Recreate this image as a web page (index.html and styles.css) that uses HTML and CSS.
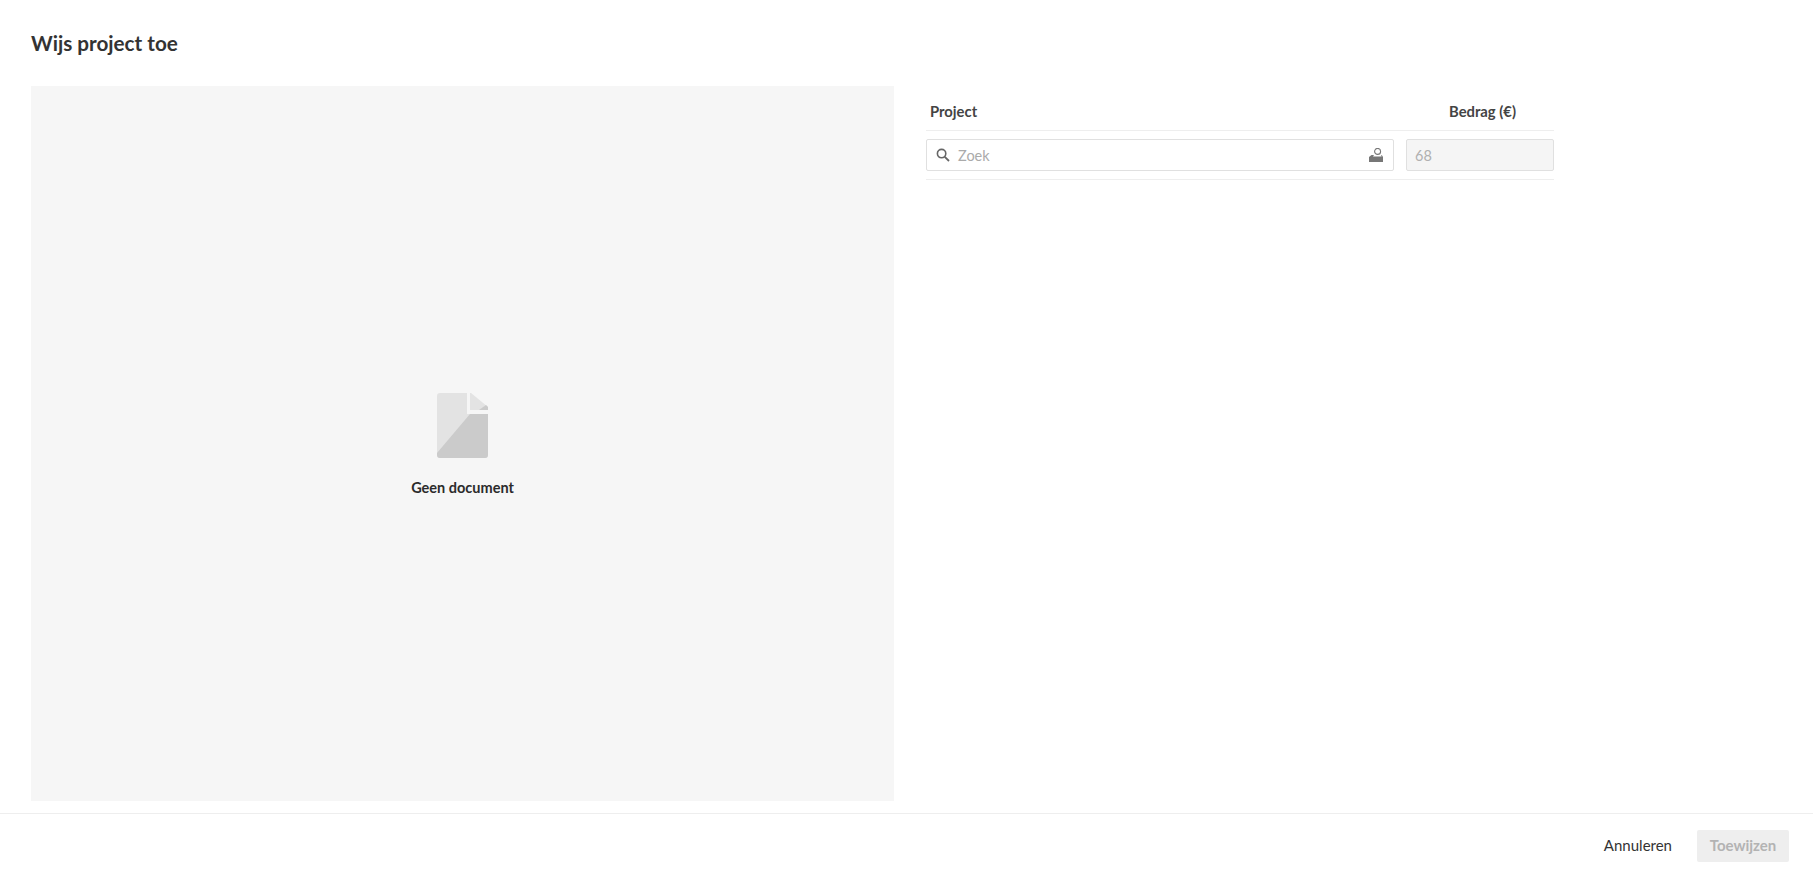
FILE: index.html
```html
<!DOCTYPE html>
<html lang="nl">
<head>
  <meta charset="UTF-8" />
  <title>Wijs project toe</title>
  <link rel="stylesheet" href="styles.css">
</head>
<body>
  <div class="dialog">
    <h1 class="dialog-title">Wijs project toe</h1>

    <div class="dialog-body">
      <!-- Document preview -->
      <div class="preview">
        <svg class="preview-icon" width="51" height="65" viewBox="0 0 51 65">
          <path d="M3 0H30V21H51V62a3 3 0 0 1-3 3H3a3 3 0 0 1-3-3V3a3 3 0 0 1 3-3Z" fill="#e3e3e3"/>
          <path d="M0 60 33 21H51V62a3 3 0 0 1-3 3H3a3 3 0 0 1-3-3Z" fill="#cbcbcb"/>
          <path d="M33 0H34L51 14V17H33Z" fill="#e3e3e3"/>
          <path d="M51 17H42L49 12 51 14Z" fill="#cbcbcb"/>
        </svg>
        <div class="preview-text">Geen document</div>
      </div>

      <!-- Project allocation -->
      <div class="allocation">
        <div class="allocation-head">
          <div class="head-project">Project</div>
          <div class="head-amount">Bedrag (€)</div>
        </div>
        <div class="allocation-row">
          <div class="search">
            <svg class="search-icon" width="14" height="14" viewBox="0 0 14 14">
              <circle cx="5.6" cy="5.6" r="4.2" fill="none" stroke="#666" stroke-width="1.6"/>
              <path d="M8.8 8.8 13 13" stroke="#666" stroke-width="1.8" fill="none"/>
            </svg>
            <span class="search-placeholder">Zoek</span>
            <svg class="inbox-icon" width="14" height="14" viewBox="0 0 14 14">
              <circle cx="8.6" cy="3.4" r="3" fill="none" stroke="#777" stroke-width="1.1"/>
              <path d="M2.5 7H5L4 8.6H12.6L12.2 7H12.8L14 9V14H0V9Z" fill="#777"/>
            </svg>
          </div>
          <div class="amount">68</div>
        </div>
      </div>
    </div>

    <div class="dialog-footer">
      <button class="btn-cancel">Annuleren</button>
      <button class="btn-submit" disabled>Toewijzen</button>
    </div>
  </div>
</body>
</html>
```

FILE: styles.css
```css
* {
  margin: 0;
  padding: 0;
  box-sizing: border-box;
  font-family: 'Lato', 'Open Sans', sans-serif;
}

body {
  height: 876px;
  background: white;
  overflow: hidden;
}

.dialog {
  height: 100%;
  display: flex;
  flex-direction: column;
}

.dialog-title {
  height: 86px;
  padding: 29px 0 0 31px;
  font-size: 20.7px;
  line-height: 28px;
  font-weight: 700;
  color: #333;
}

.dialog-body {
  display: flex;
  height: 715px;
  padding-left: 31px;
  gap: 32px;
}

.preview {
  width: 863px;
  background: #f6f6f6;
  display: flex;
  flex-direction: column;
  align-items: center;
  padding-top: 307px;
}

.preview-text {
  margin-top: 20px;
  font-size: 14.5px;
  line-height: 20px;
  font-weight: 700;
  color: #2b2b2b;
}

.allocation {
  width: 628px;
}

.allocation-head {
  display: flex;
  height: 45px;
  padding-top: 15px;
  border-bottom: 1px solid #eee;
  font-size: 14.8px;
  line-height: 21px;
  font-weight: 700;
  color: #444;
}

.head-project {
  width: 523px;
  padding-left: 4px;
}

.allocation-row {
  display: flex;
  gap: 12px;
  height: 49px;
  padding-top: 8px;
  border-bottom: 1px solid #eee;
}

.search,
.amount {
  height: 32px;
  border: 1px solid #e0e0e0;
  border-radius: 2px;
  font-size: 14.5px;
  line-height: 31px;
}

.search {
  width: 468px;
  display: flex;
  align-items: center;
  padding: 0 10px 0 9px;
}

.search-placeholder {
  flex: 1;
  margin-left: 8px;
  color: #aaa;
}

.amount {
  width: 148px;
  padding-left: 8px;
  background: #f5f5f5;
  color: #b0b0b0;
}

.dialog-footer {
  margin-top: 12px;
  height: 63px;
  border-top: 1px solid #eee;
  display: flex;
  justify-content: flex-end;
  align-items: flex-start;
  padding: 16px 24px 0 0;
  gap: 25px;
}

.btn-cancel,
.btn-submit {
  height: 32px;
  padding-bottom: 2px;
  border: none;
  font-size: 15px;
  line-height: 30px;
}

.btn-cancel {
  background: none;
  color: #333;
  font-weight: 400;
}

.btn-submit {
  width: 92px;
  background: #eee;
  border-radius: 2px;
  color: #b3b3b3;
  font-weight: 700;
}
```
